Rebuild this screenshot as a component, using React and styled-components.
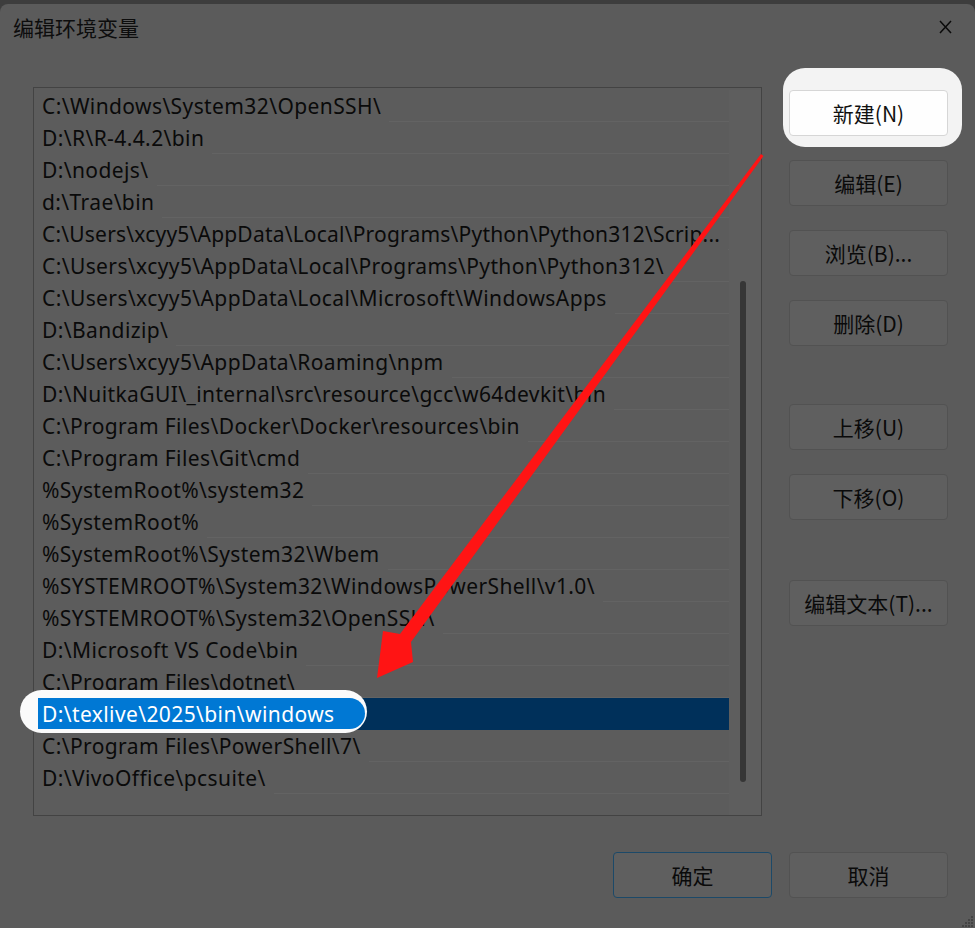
import React from "react";
import styled, { createGlobalStyle } from "styled-components";

const GlobalStyle = createGlobalStyle`
  html, body {
    margin: 0;
    padding: 0;
    background: #3d3d3d;
  }
  body {
    width: 975px;
    height: 928px;
    overflow: hidden;
    font-family: "Noto Sans", "Noto Sans CJK SC", sans-serif;
  }
`;

const Stage = styled.div`
  position: relative;
  width: 975px;
  height: 928px;
  padding-top: 4px;
  box-sizing: border-box;
`;

const Dialog = styled.div`
  height: 924px;
  background: #5b5b5b;
  border-radius: 8px 8px 0 0;
  display: flex;
  flex-direction: column;
`;

const TitleBar = styled.div`
  height: 46px;
  display: flex;
  align-items: center;
  justify-content: space-between;
  padding: 0 23px 0 13px;
`;

const Title = styled.h1`
  margin: 0;
  font-family: "Noto Sans CJK SC", sans-serif;
  font-size: 21px;
  font-weight: 400;
  color: #0d0d0d;
`;

const Body = styled.div`
  display: flex;
  gap: 27px;
  padding: 37px 27px 0 33px;
`;

const ListBox = styled.div`
  width: 729px;
  height: 729px;
  box-sizing: border-box;
  border: 1px solid #434343;
  background: #5c5c5c;
  display: flex;
  padding: 2px 0 0 4px;
`;

const Rows = styled.div`
  width: 691px;
  display: flex;
  flex-direction: column;
`;

const Row = styled.div`
  position: relative;
  height: 32px;
  flex-shrink: 0;
  display: flex;
  align-items: center;
  background: ${(p) => (p.$selected ? "#00305a" : "transparent")};
`;

const Label = styled.span`
  padding-left: 4px;
  font-size: 21px;
  letter-spacing: ${(p) => (p.$tight ? "0.2px" : "0.4px")};
  color: #0a0a0a;
  white-space: nowrap;
  overflow: hidden;
`;

const Rule = styled.span`
  flex: 1;
  align-self: flex-end;
  margin-left: 8px;
  border-bottom: 1px solid #636363;
`;

const RowSpot = styled.div`
  position: absolute;
  left: -18px;
  top: -8px;
  width: 347px;
  height: 43px;
  background: #fbfbfb;
  border-radius: 22px;
  overflow: hidden;
`;

const RowFill = styled.div`
  margin: 8px 0 0 18px;
  width: 327px;
  height: 31px;
  background: #0078d4;
  border-radius: 0 18px 18px 0;
  display: flex;
  align-items: center;
  padding-left: 4px;
  box-sizing: border-box;
  font-size: 21px;
  letter-spacing: 0.4px;
  color: #ffffff;
  white-space: nowrap;
`;

const Track = styled.div`
  flex: 1;
  background: #5e5e5e;
  padding: 191px 0 0 11px;
  box-sizing: border-box;
`;

const Thumb = styled.div`
  width: 6px;
  height: 501px;
  border-radius: 3px;
  background: #363636;
`;

const Side = styled.div`
  width: 159px;
  display: flex;
  flex-direction: column;
  padding-top: 3px;
`;

const Button = styled.div`
  width: 159px;
  height: 46px;
  box-sizing: border-box;
  display: flex;
  align-items: center;
  justify-content: center;
  border-radius: 4px;
  font-family: "Noto Sans CJK SC", sans-serif;
  font-size: 21px;
  color: ${(p) => (p.$lit ? "#111111" : "#0a0a0a")};
  background: ${(p) => (p.$lit ? "#fefefe" : "#5f5f5f")};
  border: 1px solid
    ${(p) => (p.$primary ? "#1c4968" : p.$lit ? "#d6d6d6" : "#525252")};
  margin-top: ${(p) => p.$gap || 0}px;
`;

const ButtonSpot = styled.div`
  margin: -22px -14px -11px -6px;
  padding: 22px 14px 11px 6px;
  background: #f3f3f3;
  border-radius: 22px;
`;

const Footer = styled.div`
  display: flex;
  justify-content: flex-end;
  gap: 17px;
  padding: 36px 27px 0 0;
`;

const Overlay = styled.svg`
  position: absolute;
  left: 0;
  top: 0;
  pointer-events: none;
`;

const Grip = styled.svg`
  position: absolute;
  right: 1px;
  bottom: 1px;
`;

const paths = [
  "C:\\Windows\\System32\\OpenSSH\\",
  "D:\\R\\R-4.4.2\\bin",
  "D:\\nodejs\\",
  "d:\\Trae\\bin",
  "C:\\Users\\xcyy5\\AppData\\Local\\Programs\\Python\\Python312\\Scrip...",
  "C:\\Users\\xcyy5\\AppData\\Local\\Programs\\Python\\Python312\\",
  "C:\\Users\\xcyy5\\AppData\\Local\\Microsoft\\WindowsApps",
  "D:\\Bandizip\\",
  "C:\\Users\\xcyy5\\AppData\\Roaming\\npm",
  "D:\\NuitkaGUI\\_internal\\src\\resource\\gcc\\w64devkit\\bin",
  "C:\\Program Files\\Docker\\Docker\\resources\\bin",
  "C:\\Program Files\\Git\\cmd",
  "%SystemRoot%\\system32",
  "%SystemRoot%",
  "%SystemRoot%\\System32\\Wbem",
  "%SYSTEMROOT%\\System32\\WindowsPowerShell\\v1.0\\",
  "%SYSTEMROOT%\\System32\\OpenSSH\\",
  "D:\\Microsoft VS Code\\bin",
  "C:\\Program Files\\dotnet\\",
  "D:\\texlive\\2025\\bin\\windows",
  "C:\\Program Files\\PowerShell\\7\\",
  "D:\\VivoOffice\\pcsuite\\",
];

const selected = 19;

const sideButtons = [
  { text: "编辑(E)", gap: 24 },
  { text: "浏览(B)...", gap: 24 },
  { text: "删除(D)", gap: 24 },
  { text: "上移(U)", gap: 58 },
  { text: "下移(O)", gap: 24 },
  { text: "编辑文本(T)...", gap: 60 },
];

const App = () => {
  return (
    <Stage>
      <GlobalStyle />
      <Dialog>
        <TitleBar>
          <Title>编辑环境变量</Title>
          <svg width="13" height="14" viewBox="0 0 13 14">
            <path d="M1 1 L12 13 M12 1 L1 13" stroke="#0a0a0a" strokeWidth="1.5" fill="none" />
          </svg>
        </TitleBar>
        <Body>
          <ListBox>
            <Rows>
              {paths.map((p, i) =>
                i === selected ? (
                  <Row key={i} $selected>
                    <RowSpot>
                      <RowFill>{p}</RowFill>
                    </RowSpot>
                  </Row>
                ) : (
                  <Row key={i}>
                    <Label $tight={p.length > 58}>{p}</Label>
                    <Rule />
                  </Row>
                )
              )}
            </Rows>
            <Track>
              <Thumb />
            </Track>
          </ListBox>
          <Side>
            <ButtonSpot>
              <Button $lit>新建(N)</Button>
            </ButtonSpot>
            {sideButtons.map((b) => (
              <Button key={b.text} $gap={b.gap}>
                {b.text}
              </Button>
            ))}
          </Side>
        </Body>
        <Footer>
          <Button $primary>确定</Button>
          <Button>取消</Button>
        </Footer>
      </Dialog>

      <Overlay width="975" height="928" viewBox="0 0 975 928">
        <polygon
          points="761,154 763.5,156 411,642 413,662 377,678 383,631 400,634"
          fill="#ff1414"
        />
      </Overlay>

      <Grip width="12" height="12" viewBox="0 0 12 12">
        {[
          [9, 1], [6, 4], [9, 4], [3, 7], [6, 7], [9, 7], [0, 10], [3, 10], [6, 10], [9, 10],
        ].map(([x, y], i) => (
          <rect key={i} x={x} y={y} width="2" height="2" fill="#444" />
        ))}
      </Grip>
    </Stage>
  );
};

export default App;
